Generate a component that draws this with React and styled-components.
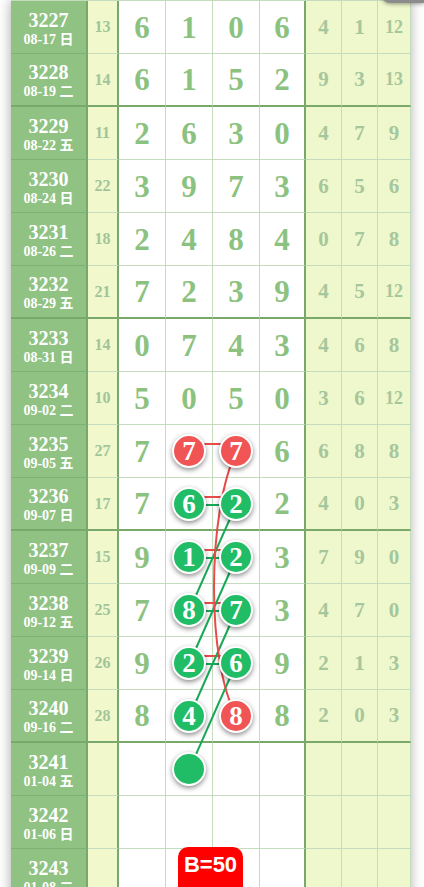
import React from 'react';
import styled, { createGlobalStyle } from 'styled-components';

const GlobalStyle = createGlobalStyle`
  html, body { margin: 0; padding: 0; background: #fff; }
  body { font-family: "Liberation Serif", "Noto Sans CJK SC", serif; overflow: hidden; }
`;

const COLS = [77, 31, 47, 47, 47, 46, 36, 36, 33];
const ROW_H = 53;
const DARK = '#78a86a';
const LIGHT = '#c4dbbd';

const Page = styled.div`
  position: relative;
  width: 424px;
  height: 887px;
  overflow: hidden;
  background: #fff;
`;

const Chart = styled.div`
  position: relative;
  margin-left: 11px;
  width: 399px;
  border-top: 1px solid ${LIGHT};
  box-shadow: 0 0 12px rgba(0, 0, 0, 0.35);
`;

const Row = styled.div`
  display: grid;
  grid-template-columns: ${COLS.map((c) => c + 'px').join(' ')};
  height: ${ROW_H}px;
`;

const bgFor = { period: '#8fc283', sum: '#f0f8cc', digit: '#ffffff', extra: '#eff8cc' };

const Cell = styled.div`
  box-sizing: border-box;
  display: flex;
  flex-direction: column;
  align-items: center;
  justify-content: center;
  padding-top: ${(p) => (p.$kind === 'period' ? '4px' : '0')};
  background: ${(p) => bgFor[p.$kind]};
  border-right: ${(p) => (p.$thick ? `2px solid ${DARK}` : `1px solid ${LIGHT}`)};
  border-bottom: ${(p) =>
    p.$groupEnd ? `2px solid ${DARK}` : `1px solid ${p.$kind === 'period' ? '#7fb272' : LIGHT}`};
  font-weight: bold;
`;

const PeriodNum = styled.div`
  color: #fff;
  font-size: 20px;
  line-height: 21px;
`;

const PeriodDate = styled.div`
  color: #fff;
  font-size: 14px;
  line-height: 18px;
  font-family: "Liberation Serif", "Noto Sans CJK SC", serif;
`;

const SumText = styled.div`
  color: #a3c498;
  font-size: 16px;
`;

const BigDigit = styled.div`
  color: #8cc27f;
  font-size: 31px;
  line-height: 31px;
`;

const ExtraText = styled.div`
  color: #a6c69c;
  font-size: ${(p) => (p.$small ? '18px' : '21px')};
`;

const Ball = styled.div`
  position: relative;
  z-index: 2;
  box-sizing: border-box;
  width: 34px;
  height: 34px;
  border-radius: 50%;
  border: 2px solid #fff;
  background: ${(p) => (p.$red ? '#f05454' : '#21bd66')};
  box-shadow: 0 2px 5px rgba(0, 0, 0, 0.45);
  color: #fff;
  font-size: 27px;
  line-height: 30px;
  text-align: center;
  font-weight: bold;
`;

const Lines = styled.svg`
  position: absolute;
  left: 0;
  top: 0;
  z-index: 1;
  pointer-events: none;
`;

const TopTab = styled.div`
  position: absolute;
  top: -20px;
  right: 0;
  width: 42px;
  height: 23px;
  background: #8c8c8c;
  border-radius: 8px 0 0 8px;
  box-shadow: 0 1px 4px rgba(0, 0, 0, 0.4);
  z-index: 5;
`;

const Badge = styled.div`
  position: absolute;
  left: 178px;
  top: 847px;
  width: 65px;
  height: 52px;
  background: #ff0000;
  border-radius: 10px;
  color: #fff;
  font-family: "Liberation Sans", Arial, sans-serif;
  font-weight: bold;
  font-size: 22px;
  display: flex;
  justify-content: center;
  padding-top: 5px;
  box-sizing: border-box;
  z-index: 6;
`;

const rows = [
  { p: '3227', d: '08-17 日', s: 13, n: [6, 1, 0, 6], e: [4, 1, 12] },
  { p: '3228', d: '08-19 二', s: 14, n: [6, 1, 5, 2], e: [9, 3, 13] },
  { p: '3229', d: '08-22 五', s: 11, n: [2, 6, 3, 0], e: [4, 7, 9] },
  { p: '3230', d: '08-24 日', s: 22, n: [3, 9, 7, 3], e: [6, 5, 6] },
  { p: '3231', d: '08-26 二', s: 18, n: [2, 4, 8, 4], e: [0, 7, 8] },
  { p: '3232', d: '08-29 五', s: 21, n: [7, 2, 3, 9], e: [4, 5, 12] },
  { p: '3233', d: '08-31 日', s: 14, n: [0, 7, 4, 3], e: [4, 6, 8] },
  { p: '3234', d: '09-02 二', s: 10, n: [5, 0, 5, 0], e: [3, 6, 12] },
  { p: '3235', d: '09-05 五', s: 27, n: [7, 7, 7, 6], e: [6, 8, 8], b: { 1: 'r', 2: 'r' } },
  { p: '3236', d: '09-07 日', s: 17, n: [7, 6, 2, 2], e: [4, 0, 3], b: { 1: 'g', 2: 'g' } },
  { p: '3237', d: '09-09 二', s: 15, n: [9, 1, 2, 3], e: [7, 9, 0], b: { 1: 'g', 2: 'g' } },
  { p: '3238', d: '09-12 五', s: 25, n: [7, 8, 7, 3], e: [4, 7, 0], b: { 1: 'g', 2: 'g' } },
  { p: '3239', d: '09-14 日', s: 26, n: [9, 2, 6, 9], e: [2, 1, 3], b: { 1: 'g', 2: 'g' } },
  { p: '3240', d: '09-16 二', s: 28, n: [8, 4, 8, 8], e: [2, 0, 3], b: { 1: 'g', 2: 'r' } },
  { p: '3241', d: '01-04 五', b: { 1: 'g' } },
  { p: '3242', d: '01-06 日' },
  { p: '3243', d: '01-08 二' },
];

const isGroupEnd = (p) => (Number(p) - 3228) % 4 === 0;

const cx2 = COLS[0] + COLS[1] + COLS[2] + COLS[3] / 2;
const cx3 = COLS[0] + COLS[1] + COLS[2] + COLS[3] + COLS[4] / 2;
const cy = (i) => ROW_H * i + 26;

function ChartRow({ r }) {
  const g = isGroupEnd(r.p);
  return (
    <Row>
      <Cell $kind="period" $thick $groupEnd={g}>
        <PeriodNum>{r.p}</PeriodNum>
        <PeriodDate>{r.d}</PeriodDate>
      </Cell>
      <Cell $kind="sum" $thick $groupEnd={g}>
        {r.s != null && <SumText>{r.s}</SumText>}
      </Cell>
      {[0, 1, 2, 3].map((k) => {
        const ball = r.b && r.b[k];
        return (
          <Cell key={k} $kind="digit" $thick={k === 3} $groupEnd={g}>
            {ball ? (
              <Ball $red={ball === 'r'}>{r.n ? r.n[k] : ''}</Ball>
            ) : (
              r.n && <BigDigit>{r.n[k]}</BigDigit>
            )}
          </Cell>
        );
      })}
      {[0, 1, 2].map((k) => (
        <Cell key={'e' + k} $kind="extra" $groupEnd={g}>
          {r.e && <ExtraText $small={r.e[k] >= 10}>{r.e[k]}</ExtraText>}
        </Cell>
      ))}
    </Row>
  );
}

export default function App() {
  const greens = [9, 10, 11, 12];
  const ticks = [8, 9, 10, 11, 12];
  const RED = '#e94a4a';
  const GREEN = '#18a957';
  return (
    <Page>
      <GlobalStyle />
      <Chart>
        {rows.map((r) => (
          <ChartRow key={r.p} r={r} />
        ))}
        <Lines width="399" height={rows.length * ROW_H}>
          {ticks.map((i) => (
            <line key={'rt' + i} x1={cx2} y1={cy(i) - 7} x2={cx3} y2={cy(i) - 7} stroke={RED} strokeWidth="2" />
          ))}
          {greens.map((i) => (
            <line key={'gt' + i} x1={cx2} y1={cy(i) + 1} x2={cx3} y2={cy(i) + 1} stroke={GREEN} strokeWidth="2" />
          ))}
          {greens.map((i) => (
            <line key={'gd' + i} x1={cx2} y1={cy(i + 2)} x2={cx3} y2={cy(i)} stroke={GREEN} strokeWidth="2" />
          ))}
          <path
            d={`M${cx3},${cy(8)} C${cx3 - 30},${cy(9) + 10} ${cx3 - 30},${cy(12)} ${cx3},${cy(13)}`}
            fill="none"
            stroke={RED}
            strokeWidth="2"
          />
        </Lines>
      </Chart>
      <TopTab />
      <Badge>B=50</Badge>
    </Page>
  );
}
